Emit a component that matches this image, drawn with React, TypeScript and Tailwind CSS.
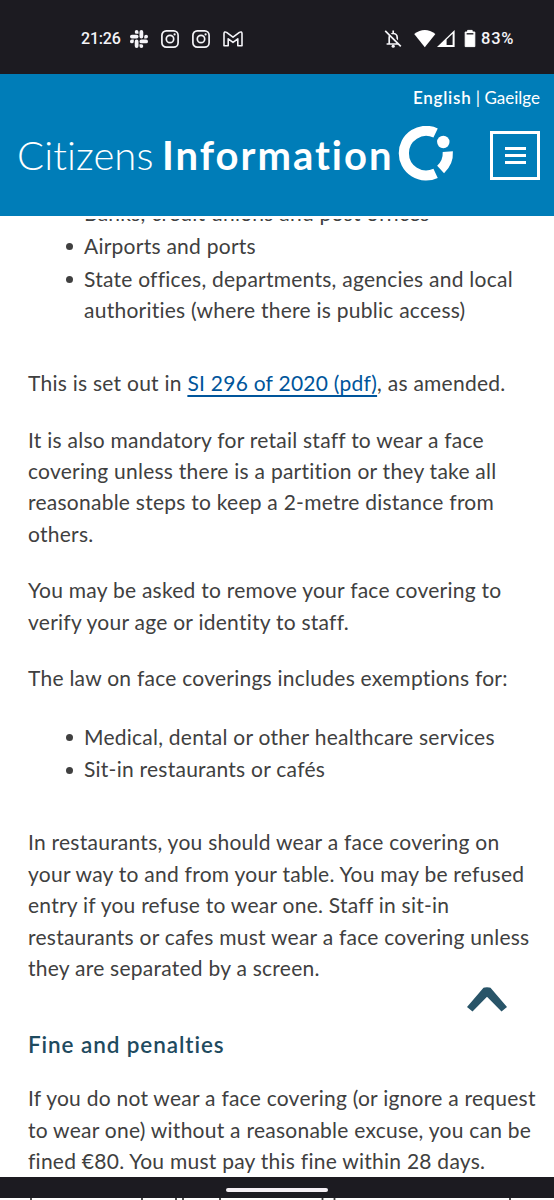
import React from "react";

function Slack() {
  return (
    <svg viewBox="0 0 24 24" className="h-[18px] w-[18px]" fill="#f4f4f8">
      <path d="M5.04 15.17a2.53 2.53 0 0 1-2.52 2.52A2.53 2.53 0 0 1 0 15.17a2.53 2.53 0 0 1 2.52-2.52h2.52zm1.27 0a2.53 2.53 0 0 1 2.52-2.52 2.53 2.53 0 0 1 2.52 2.52v6.31A2.53 2.53 0 0 1 8.83 24a2.53 2.53 0 0 1-2.52-2.52zM8.83 5.04a2.53 2.53 0 0 1-2.52-2.52A2.53 2.53 0 0 1 8.83 0a2.53 2.53 0 0 1 2.52 2.52v2.52zm0 1.27a2.53 2.53 0 0 1 2.52 2.52 2.53 2.53 0 0 1-2.52 2.52H2.52A2.53 2.53 0 0 1 0 8.83a2.53 2.53 0 0 1 2.52-2.52zM18.96 8.83a2.53 2.53 0 0 1 2.52-2.52A2.53 2.53 0 0 1 24 8.83a2.53 2.53 0 0 1-2.52 2.52h-2.52zm-1.27 0a2.53 2.53 0 0 1-2.52 2.52 2.53 2.53 0 0 1-2.52-2.52V2.52A2.53 2.53 0 0 1 15.17 0a2.53 2.53 0 0 1 2.52 2.52zM15.17 18.96a2.53 2.53 0 0 1 2.52 2.52A2.53 2.53 0 0 1 15.17 24a2.53 2.53 0 0 1-2.52-2.52v-2.52zm0-1.27a2.53 2.53 0 0 1-2.52-2.52 2.53 2.53 0 0 1 2.52-2.52h6.31A2.53 2.53 0 0 1 24 15.17a2.53 2.53 0 0 1-2.52 2.52z" />
    </svg>
  );
}

function Instagram() {
  return (
    <svg viewBox="0 0 18 18" className="h-[18px] w-[18px]" fill="none" stroke="#f4f4f8" strokeWidth="1.7">
      <rect x="0.9" y="0.9" width="16.2" height="16.2" rx="4.4" />
      <circle cx="9" cy="9" r="3.7" />
      <circle cx="13.6" cy="4.4" r="1.1" fill="#f4f4f8" stroke="none" />
    </svg>
  );
}

function Gmail() {
  return (
    <svg viewBox="0 0 20 16" className="h-4 w-5" fill="none" stroke="#f4f4f8" strokeWidth="1.6" strokeLinejoin="round">
      <path d="M1 14.8V2.6Q1.2 .2 3.6 1.4L10 6.2l6.4-4.8Q18.8 .2 19 2.6V14.8H14.8V7.8L10 11.4 5.2 7.8V14.8Z" />
    </svg>
  );
}

function StatusIcons() {
  return (
    <svg viewBox="0 0 94 22" className="h-[22px] w-[94px]" fill="none">
      <path d="M6.2 16V9.5a4 4 0 0 1 8 0V16M3.6 16h13M10.2 2.5v3" stroke="#f4f4f8" strokeWidth="1.7" />
      <circle cx="10.2" cy="18.2" r="1.6" fill="#f4f4f8" />
      <path d="M3.4 2.2 18.4 17.2" stroke="#1c1b21" strokeWidth="2" />
      <path d="M2.2 2.8 17.8 18.4" stroke="#f4f4f8" strokeWidth="1.7" />
      <path d="M41.8 19.2 31.2 6Q41.8 -1.8 52.4 6Z" fill="#fff" />
      <path d="M54 19V19L71.6 2V19Z" fill="#fff" />
      <path d="M63.6 11.6 69.6 5.8V17H63.6Z" fill="#1c1b21" />
      <path d="M82.2 4H84.6V2.4H89.2V4H91.8V18.6H82.2Z" fill="#fff" stroke="#fff" strokeLinejoin="round" />
      <path d="M83.6 5.8h6.8" stroke="#1c1b21" strokeWidth="1.4" />
    </svg>
  );
}

function CiMark() {
  return (
    <svg viewBox="0 0 56 56" className="-mt-[2px] h-14 w-14 shrink-0" fill="none">
      <path d="M37.6 7A22.3 22.3 0 1 0 37.6 47.4" stroke="#fff" strokeWidth="10.2" />
      <path d="M49.8 25.6A22.3 22.3 0 0 1 42.6 43.4" stroke="#fff" strokeWidth="10.2" />
      <circle cx="45.3" cy="16" r="6.2" fill="#fff" />
    </svg>
  );
}

function Item({ children }: { children: React.ReactNode }) {
  return (
    <li className="mb-[1.3px] flex">
      <span className="mt-[13.2px] mr-[10.6px] size-[7.4px] shrink-0 rounded-full bg-[#404040]" />
      <span>{children}</span>
    </li>
  );
}

export default function App() {
  return (
    <div className="relative flex h-[1200px] w-[554px] flex-col overflow-hidden bg-white font-['Lato',sans-serif] text-[#404040]">
      <div className="flex h-[74px] shrink-0 items-center bg-[#1c1b21] pt-1 pl-[81px] font-['Roboto',sans-serif] text-[#f4f4f8]">
        <span className="w-[49px] text-[16px] font-medium tracking-[-0.2px]">21:26</span>
        <div className="flex items-center gap-[13px]">
          <Slack />
          <Instagram />
          <Instagram />
          <Gmail />
        </div>
        <div className="ml-[140px] flex items-center">
          <StatusIcons />
        </div>
        <span className="ml-[4px] text-[16.5px] font-medium tracking-[0.8px]">83%</span>
      </div>

      <header className="flex h-[145px] shrink-0 flex-col border-b-[3px] border-white bg-[#007db8] text-white">
        <div className="flex h-[46px] items-center justify-end pt-[2px] pr-[14px] text-[17px] whitespace-pre">
          <span className="font-semibold tracking-[0.75px]">English</span>
          <span> | Gaeilge</span>
        </div>
        <div className="flex h-[70px] items-center pl-[16px]">
          <div className="flex w-[382px] text-[40px] leading-[56px] whitespace-pre">
            <span className="w-[146px] pl-px font-light tracking-[0.1px]">Citizens</span>
            <span className="font-bold tracking-[2px]">Information</span>
          </div>
          <CiMark />
          <div className="ml-9 flex h-[49px] w-[50px] flex-col items-center justify-center gap-[4px] border-[3px] border-white">
            <span className="h-[3px] w-[21px] bg-white" />
            <span className="h-[3px] w-[21px] bg-white" />
            <span className="h-[3px] w-[21px] bg-white" />
          </div>
        </div>
      </header>

      <main className="h-[958px] shrink-0 overflow-hidden pl-7 text-[21px] leading-[31.45px] tracking-[0.25px] whitespace-nowrap">
        <ul className="-mt-[22px] mb-[41.7px] pl-[38px]">
          <Item>Banks, credit unions and post offices</Item>
          <Item>Airports and ports</Item>
          <Item>State offices, departments, agencies and local<br />authorities (where there is public access)</Item>
        </ul>
        <p className="mb-[25px]">
          This is set out in <a className="text-[#00559b] underline decoration-[1.5px] underline-offset-[4px]">SI 296 of 2020 (pdf)</a>, as amended.
        </p>
        <p className="mb-[25px]">
          It is also mandatory for retail staff to wear a face<br />covering unless there is a partition or they take all<br />reasonable steps to keep a 2-metre distance from<br />others.
        </p>
        <p className="mb-[25px]">You may be asked to remove your face covering to<br />verify your age or identity to staff.</p>
        <p className="mb-[27px]">The law on face coverings includes exemptions for:</p>
        <ul className="mb-[41.4px] pl-[38px]">
          <Item>Medical, dental or other healthcare services</Item>
          <Item>Sit-in restaurants or cafés</Item>
        </ul>
        <p className="mb-[45.2px]">
          In restaurants, you should wear a face covering on<br />your way to and from your table. You may be refused<br />entry if you refuse to wear one. Staff in sit-in<br />restaurants or cafes must wear a face covering unless<br />they are separated by a screen.
        </p>
        <h2 className="mb-[22px] text-[22.5px] font-semibold tracking-[0.9px] text-[#1f4b5f]">Fine and penalties</h2>
        <p>
          If you do not wear a face covering (or ignore a request<br />to wear one) without a reasonable excuse, you can be<br />fined €80. You must pay this fine within 28 days.
        </p>
      </main>

      <div className="flex h-[21px] w-full shrink-0 items-center justify-center bg-[#1c1b21] pt-1">
        <span className="h-1 w-[102px] rounded-full bg-[#f4eff4]" />
      </div>
      <svg viewBox="0 0 554 2" className="h-[2px] w-[554px] shrink-0">
        <path d="M31 0v2M142 0v2M176 0v2M183 0v2M220 0v2M322.5 0v2M334.5 0v2M510 0v2" stroke="#404040" strokeWidth="1.8" />
      </svg>

      <svg viewBox="0 0 42 26" className="absolute top-[986px] left-[466px] h-[26px] w-[42px]" fill="#285468">
        <path d="M1 21 17.5 1.8Q18.5 1.2 21 1.2T24.5 1.8L41 21 35.5 25.4 21 10.8 6.5 25.4Z" />
      </svg>
    </div>
  );
}
